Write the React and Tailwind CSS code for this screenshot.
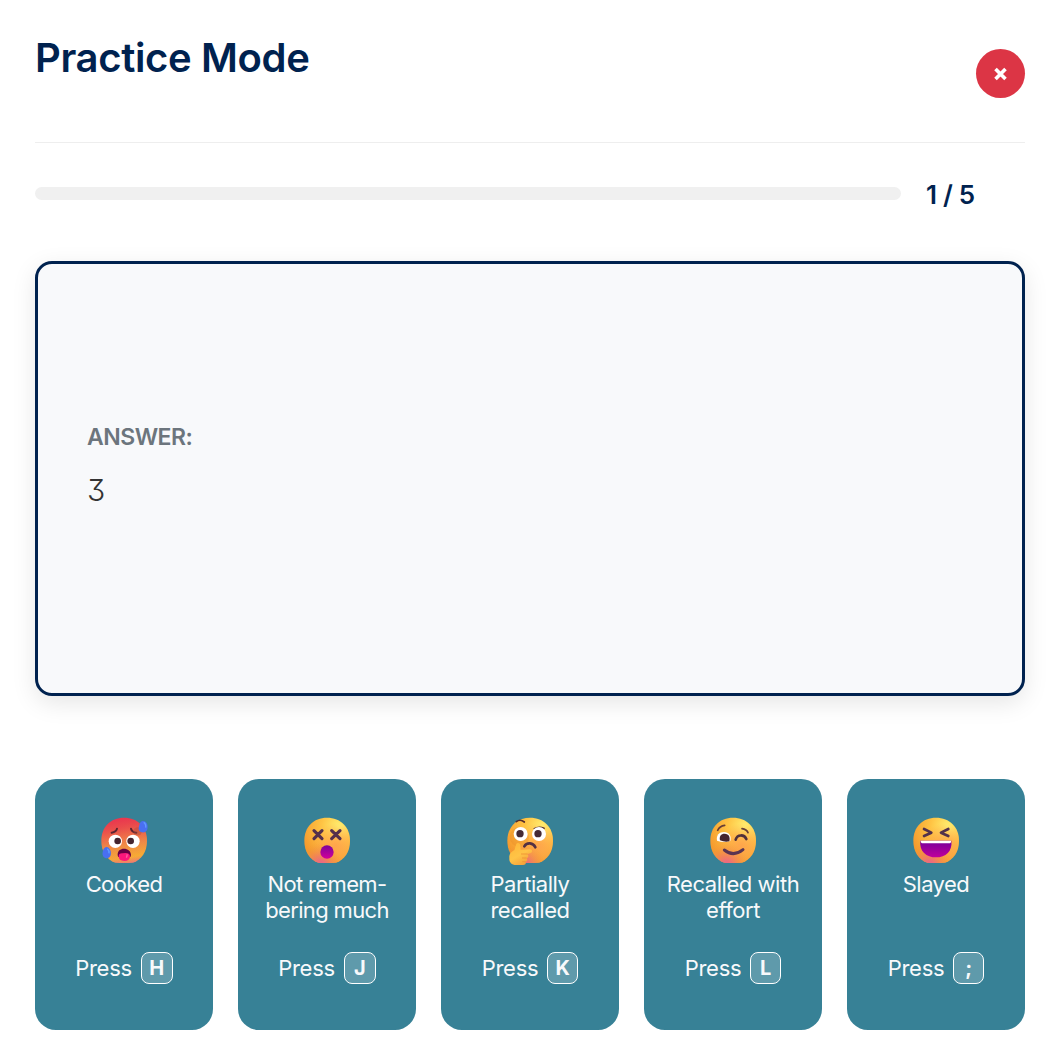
import React from "react";

function Face({ id, hot }) {
  return (
    <>
      <defs>
        <radialGradient id={id + "a"} cx="0.76" cy="0.2" r="0.85">
          <stop offset="0" stopColor="#fff071" />
          <stop offset="0.45" stopColor="#ffc444" />
          <stop offset="1" stopColor="#f59a2e" />
        </radialGradient>
        <radialGradient id={id + "b"} cx="0.68" cy="0.62" r="0.5">
          <stop offset="0" stopColor="#ffa04d" stopOpacity="0.85" />
          <stop offset="1" stopColor="#ffa04d" stopOpacity="0" />
        </radialGradient>
        <radialGradient id={id + "c"} cx="0.35" cy="1.04" r="0.48">
          <stop offset="0" stopColor="#e85a9c" />
          <stop offset="0.4" stopColor="#ef7869" stopOpacity="0.75" />
          <stop offset="1" stopColor="#f39a32" stopOpacity="0" />
        </radialGradient>
        <linearGradient id={id + "d"} x1="0.4" y1="0" x2="0.55" y2="1">
          <stop offset="0" stopColor="#e9344f" />
          <stop offset="0.25" stopColor="#ea4f4b" />
          <stop offset="0.6" stopColor="#ee8846" />
          <stop offset="0.88" stopColor="#f6ac32" />
          <stop offset="1" stopColor="#ee7c70" />
        </linearGradient>
      </defs>
      {["a", "b", "c"].map((k) => (
        <path
          key={k}
          d="M120 38C161 38 189 66 189 107C189 140 173 164 147 173Q120 175 94 173C68 164 52 140 52 107C52 66 79 38 120 38Z"
          fill={`url(#${id}${hot && k === "a" ? "d" : k})`}
          opacity={hot && k !== "a" ? 0.15 : 1}
        />
      ))}
    </>
  );
}

function Hot() {
  return (
    <>
      <Face id="hot" hot />
      <g fill="none" stroke="#5b2430" strokeWidth="6" strokeLinecap="round">
        <path d="M83 83Q97 81 99 71M141 71Q144 82 157 83" />
      </g>
      <ellipse cx="161" cy="79" rx="13" ry="12" fill="#a84b3c" opacity="0.4" />
      <circle cx="94" cy="109" r="20" fill="#fff" />
      <circle cx="147" cy="109" r="20" fill="#fff" />
      <circle cx="101" cy="108" r="10" fill="#45252f" />
      <circle cx="140" cy="108" r="10" fill="#45252f" />
      <path d="M101 151C100 137 109 131 120 131S141 138 141 150Q141 157 136 157H106Q101 157 101 151Z" fill="#680044" />
      <path d="M104 154Q104 144 116 145Q136 141 138 153C138 163 132 168 121 168S104 163 104 154Z" fill="#fb177b" />
      <path d="M128 148Q131 150 127 158" stroke="#ff61a0" strokeWidth="4" fill="none" />
      <path d="M177 48C189 48 193 62 190 73C187 82 178 84 171 81C163 78 163 69 166 60Q169 48 177 48Z" fill="#496ff1" />
      <path d="M68 126C78 127 83 141 80 151C77 160 69 162 62 158C55 153 54 146 57 137Q60 126 68 126Z" fill="#496ff1" />
      <path d="M179 52Q187 57 185 68M70 131Q76 136 75 145" stroke="#5f9bff" strokeWidth="4" fill="none" />
    </>
  );
}

function Dizzy() {
  return (
    <>
      <Face id="dizzy" />
      <path d="M81 77L105 101M105 77L81 101M134 77L159 101M159 77L134 101" stroke="#55304c" strokeWidth="9.5" strokeLinecap="round" />
      <linearGradient id="dizzyMouth" x1="0" y1="0" x2="0" y2="1">
        <stop offset="0" stopColor="#7c049a" />
        <stop offset="1" stopColor="#d3009b" />
      </linearGradient>
      <ellipse cx="120" cy="141" rx="20" ry="20.5" fill="url(#dizzyMouth)" />
    </>
  );
}

function Thinking() {
  return (
    <>
      <Face id="think" />
      <ellipse cx="88" cy="96" rx="29" ry="30" fill="#dd7b20" opacity="0.22" />
      <g fill="none" stroke="#542c2c" strokeWidth="5" strokeLinecap="round">
        <path d="M79 50Q91 41 103 51M133 71Q147 63 162 70" />
      </g>
      <circle cx="92" cy="87" r="21" fill="#fff" />
      <circle cx="147" cy="87" r="21" fill="#fff" />
      <circle cx="90" cy="86" r="11" fill="#452a35" />
      <circle cx="144" cy="86" r="11" fill="#452a35" />
      <path d="M103 124C110 111 130 112 136 127" fill="none" stroke="#533044" strokeWidth="8" strokeLinecap="round" />
      <linearGradient id="thinkHand" x1="0" y1="0" x2="0.6" y2="1">
        <stop offset="0" stopColor="#ffb536" />
        <stop offset="0.6" stopColor="#ffc447" />
        <stop offset="1" stopColor="#f5a23b" />
      </linearGradient>
      <path d="M78 119C80 112 89 112 91 120L92 134L120 133C129 134 128 144 120 145L112 147C117 151 116 158 110 160C114 165 111 170 107 171C109 177 105 180 99 180H79C64 180 57 172 58 159C57 147 64 140 73 136Z" fill="url(#thinkHand)" />
      <path d="M93 147H113M96 159H110M97 170H107" stroke="#ee9134" strokeWidth="2.5" />
    </>
  );
}

function Winking() {
  return (
    <>
      <Face id="wink" />
      <g fill="none" stroke="#694036" strokeWidth="5" strokeLinecap="round">
        <path d="M74 76Q80 63 95 61M147 71Q161 73 165 83" />
      </g>
      <path d="M72 107C69 91 79 81 93 81C108 81 116 94 112 108Q92 114 72 107Z" fill="#fff" />
      <path d="M81 106C78 94 84 86 95 86C108 86 112 97 109 109Q95 112 81 106Z" fill="#45252f" />
      <path d="M128 104C133 87 154 88 160 102" fill="none" stroke="#50303a" strokeWidth="8" strokeLinecap="round" />
      <path d="M94 135Q121 157 150 134" fill="none" stroke="#5a3451" strokeWidth="9" strokeLinecap="round" />
    </>
  );
}

function Laughing() {
  return (
    <>
      <Face id="laugh" />
      <path d="M84 72L106 83L84 93M157 72L135 83L157 93" fill="none" stroke="#54314b" strokeWidth="8" strokeLinecap="round" strokeLinejoin="round" />
      <linearGradient id="laughMouth" x1="0" y1="0" x2="0" y2="1">
        <stop offset="0" stopColor="#76009b" />
        <stop offset="1" stopColor="#c0009b" />
      </linearGradient>
      <path d="M73 107H166C170 139 149 157 120 157S69 139 73 107Z" fill="url(#laughMouth)" />
      <path d="M74 107H165Q166 115 159 115H81Q74 115 74 107Z" fill="#fff" />
    </>
  );
}

const ratings = [
  { Art: Hot, lines: ["Cooked"], track: "tracking-[-0.6px]", hotkey: "H", box: "0 0 240 210", w: "w-8" },
  { Art: Dizzy, lines: ["Not remem-", "bering much"], track: "tracking-[-0.65px]", hotkey: "J", box: "0 0 240 210", w: "w-8" },
  { Art: Thinking, lines: ["Partially", "recalled"], track: "tracking-[-0.45px]", hotkey: "K", box: "0 0 240 210", w: "w-[31px]" },
  { Art: Winking, lines: ["Recalled with", "effort"], track: "tracking-[-0.45px]", hotkey: "L", box: "0 0 240 210", w: "w-[31px]" },
  { Art: Laughing, lines: ["Slayed"], track: "tracking-[-0.55px]", hotkey: ";", box: "0 0 240 210", w: "w-[31px]" },
];

export default function App() {
  return (
    <main className="h-[1049px] overflow-hidden bg-white pl-[35px] pr-[33px] font-['Inter',sans-serif]">
      <header className="flex h-[143px] items-start justify-between border-b border-[#eeeeee]">
        <h1 className="mt-[33px] whitespace-nowrap text-[40px] font-semibold leading-[50px] tracking-[-0.35px] text-[#00224f]">Practice Mode</h1>
        <button aria-label="Close" className="mt-[49px] flex size-[49px] items-center justify-center rounded-full bg-[#dc3545]">
          <svg width="15" height="14" viewBox="0 0 15 14" className="mt-px" stroke="#fff" strokeWidth="3.6">
            <path d="M2.5 2L12.5 12M12.5 2L2.5 12" />
          </svg>
        </button>
      </header>

      <div className="mt-[34px] flex h-[34px] items-start">
        <div className="mt-[10px] h-[13px] w-[866px] rounded-full bg-[#f0f0f0]" />
        <span className="ml-[25px] mt-px whitespace-nowrap text-[26px] font-semibold leading-[34px] tracking-[-0.6px] text-[#00224f] [word-spacing:0.6px]">1 / 5</span>
      </div>

      <section className="mt-[50px] h-[435px] rounded-[17px] border-[3px] border-[#00224f] bg-[#f8f9fb] px-[50px] pt-[157px] shadow-[0_7px_25px_rgba(0,0,0,0.1)]">
        <div className="-ml-px text-[23px] font-semibold leading-[32px] tracking-[-0.5px] text-[#6c757d]">ANSWER:</div>
        <div className="-ml-px mt-[17px] text-[30px] font-light leading-[40px] text-[#333333] [font-feature-settings:'cv09']">3</div>
      </section>

      <div className="mt-[83px] grid grid-cols-5 gap-[25px]">
        {ratings.map(({ Art, lines, track, hotkey, box, w }) => (
          <button key={hotkey} className="flex h-[251px] flex-col items-center rounded-[21px] bg-[#378196] pt-[26px] text-[22px] leading-[26px] text-[#f8f9fb]">
            <svg width="80" height="70" viewBox={box} className="shrink-0">
              <Art />
            </svg>
            <span className={`${track} -mt-[4px] block h-[52px] whitespace-nowrap text-center`}>
              {lines.map((line) => (
                <span key={line} className="block">{line}</span>
              ))}
            </span>
            <span className="mt-[29px] flex h-8 items-center gap-[9px]">
              <span className="tracking-[-0.3px]">Press</span>
              <kbd className={`${w} flex h-8 items-center justify-center rounded-[8px] border border-white bg-white/20 font-['Inter',sans-serif] text-[20px] font-bold`}>{hotkey}</kbd>
            </span>
          </button>
        ))}
      </div>
    </main>
  );
}
